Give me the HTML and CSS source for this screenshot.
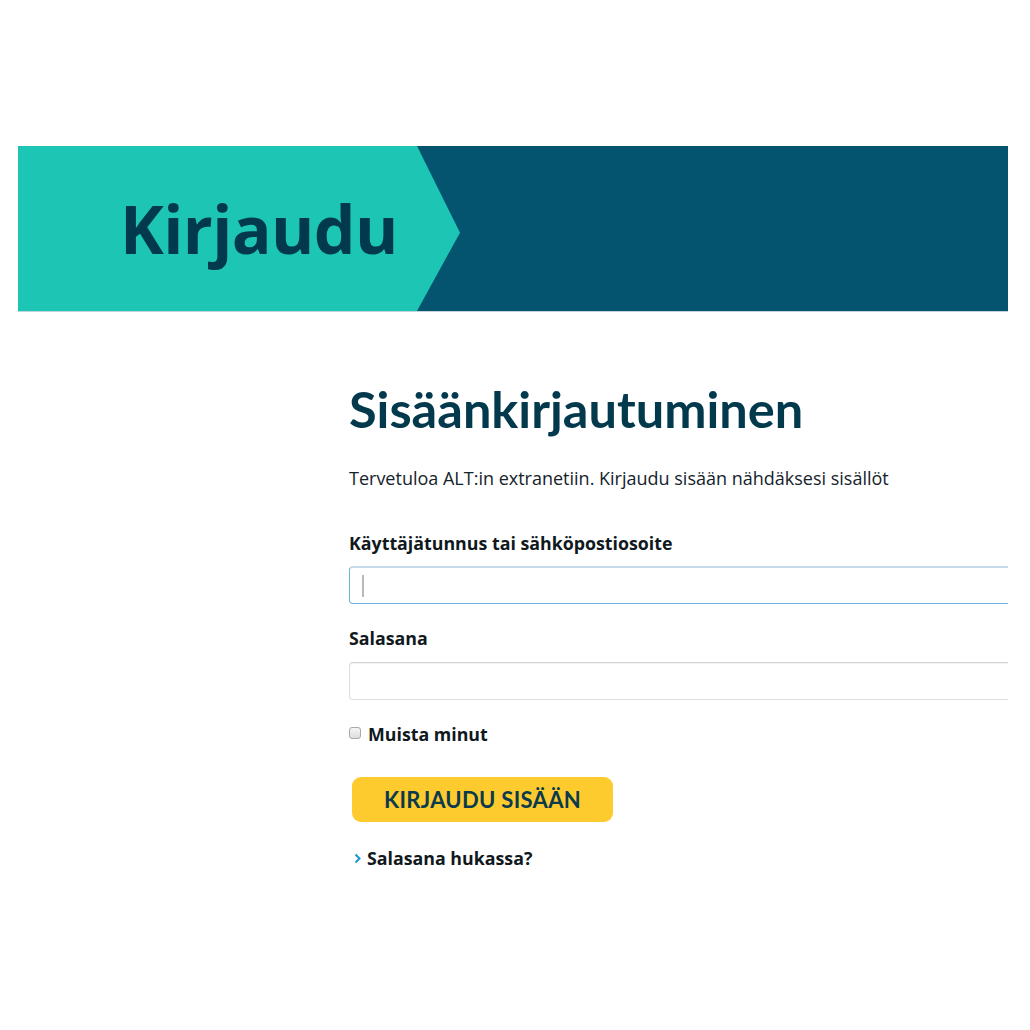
FILE: index.html
```html
<!DOCTYPE html>
<html lang="fi">
<head>
<meta charset="utf-8">
<title>Kirjaudu</title>
<link rel="stylesheet" href="styles.css">
</head>
<body>
<div class="page">
  <header class="banner">
    <div class="banner-arrow">
      <h1 class="banner-title">Kirjaudu</h1>
    </div>
  </header>
  <main class="content">
    <h2 class="heading">Sisäänkirjautuminen</h2>
    <p class="intro">Tervetuloa ALT:in extranetiin. Kirjaudu sisään nähdäksesi sisällöt</p>
    <form class="form">
      <label class="label" for="user">Käyttäjätunnus tai sähköpostiosoite</label>
      <div class="field">
        <input class="input input-focus" id="user" type="text">
        <span class="caret"></span>
      </div>
      <label class="label label-pass" for="pass">Salasana</label>
      <div class="field field-pass">
        <input class="input" id="pass" type="password">
      </div>
      <label class="remember"><span class="checkbox"></span>Muista minut</label>
      <button class="submit" type="button">KIRJAUDU SISÄÄN</button>
      <a class="lost" href="#"><svg class="chev" width="7" height="11" viewBox="0 0 7 11"><polyline points="1.5,1.5 5.5,5.5 1.5,9.5" fill="none" stroke="#1c97d4" stroke-width="2"/></svg>Salasana hukassa?</a>
    </form>
  </main>
</div>
</body>
</html>
```
FILE: styles.css
```css
html, body {
  margin: 0;
  padding: 0;
  background: #ffffff;
}
.page {
  width: 990px;
  margin: 146px 0 0 18px;
  overflow: hidden;
  font-family: "Open Sans", "Noto Sans", sans-serif;
  color: #0f2530;
}
.banner {
  height: 165px;
  background: #04546f;
  border-bottom: 1px solid #c3d3dc;
  display: flex;
}
.banner-arrow {
  width: 442px;
  height: 100%;
  background: #1dc6b4;
  clip-path: polygon(0 0, 399px 0, 100% 52.5%, 399px 100%, 0 100%);
  display: flex;
  align-items: center;
  padding-left: 102px;
  box-sizing: border-box;
}
.banner-title {
  margin: 0;
  font-family: "Open Sans", sans-serif;
  font-weight: 700;
  font-size: 66px;
  line-height: 1;
  color: #03394c;
  letter-spacing: -0.6px;
  position: relative;
  top: -1px;
}
.content {
  padding-left: 331px;
  padding-top: 66px;
  padding-bottom: 120px;
}
.heading {
  margin: 0;
  font-family: "Lato", sans-serif;
  font-weight: 700;
  font-size: 50.5px;
  line-height: 62px;
  color: #03394c;
}
.intro {
  margin: 26px 0 0 0;
  font-family: "Open Sans", sans-serif;
  font-size: 18px;
  line-height: 24px;
  color: #15232b;
}
.form {
  display: flex;
  flex-direction: column;
  align-items: flex-start;
  margin-top: 42px;
}
.label {
  font-family: "Open Sans", sans-serif;
  font-weight: 700;
  font-size: 17.8px;
  line-height: 22px;
  color: #101820;
}
.field {
  position: relative;
  margin-top: 12px;
}
.field-pass {
  margin-top: 13px;
}
.input {
  -webkit-appearance: none;
  appearance: none;
  display: block;
  width: 720px;
  height: 38px;
  box-sizing: border-box;
  border: 1px solid #dddddd;
  border-top-color: #d2d2d2;
  border-radius: 4px;
  box-shadow: inset 0 1px 1px rgba(0, 0, 0, 0.05);
  background: #ffffff;
  padding: 0 12px;
  font-size: 16px;
  outline: none;
}
.input.input-focus {
  border: 1px solid #6db3df;
  border-top: 2px solid #c8dae9;
  box-shadow: none;
}
.caret {
  position: absolute;
  left: 13px;
  top: 9px;
  width: 2px;
  height: 22px;
  background: #b8b8b8;
}
.label-pass {
  margin-top: 23px;
}
.remember {
  display: flex;
  align-items: center;
  margin-top: 23px;
  font-family: "Open Sans", sans-serif;
  font-weight: 700;
  font-size: 17.8px;
  line-height: 22px;
  color: #101820;
}
.checkbox {
  width: 10px;
  height: 10px;
  border: 1px solid #a9a9a9;
  border-radius: 3px;
  background: linear-gradient(#f4f4f4, #dedede);
  margin-right: 7px;
  margin-top: -2px;
}
.submit {
  margin-top: 32px;
  margin-left: 3px;
  width: 261px;
  height: 45px;
  border: none;
  border-radius: 9px;
  background: #fecb2f;
  font-family: "Lato", sans-serif;
  font-weight: 700;
  font-size: 22px;
  color: #0b3a4c;
  letter-spacing: 0.3px;
  padding: 0;
  cursor: pointer;
}
.lost {
  display: flex;
  align-items: center;
  margin-top: 25px;
  margin-left: 5px;
  font-family: "Open Sans", sans-serif;
  font-weight: 700;
  font-size: 17.8px;
  line-height: 22px;
  color: #101820;
  text-decoration: none;
}
.chev {
  margin-right: 6px;
  margin-top: 1px;
}
```
